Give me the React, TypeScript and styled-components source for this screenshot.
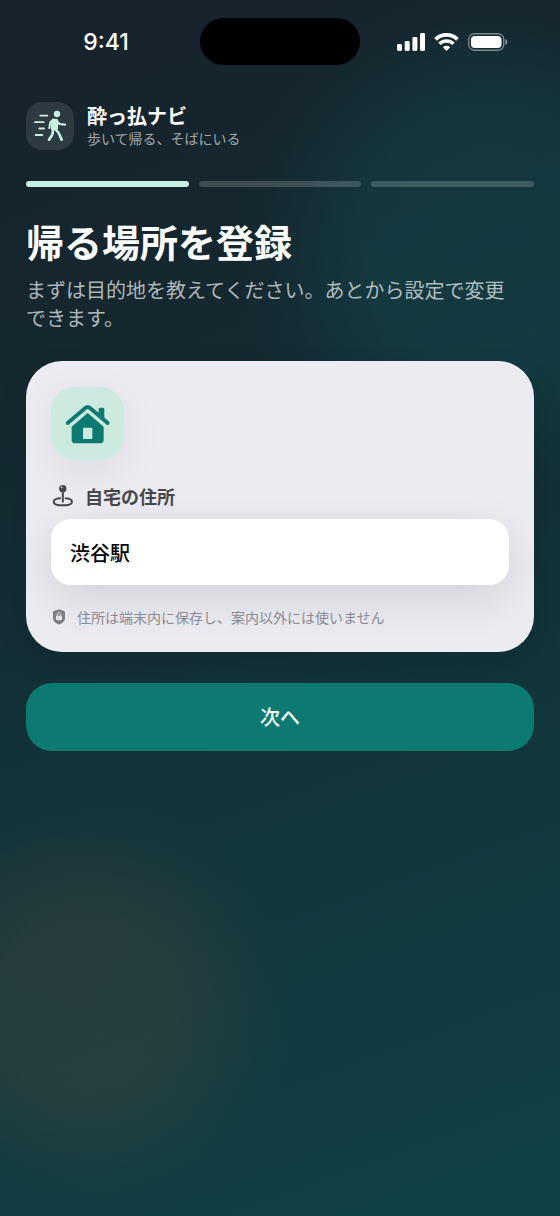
import React, { useState } from "react";
import styled, { createGlobalStyle } from "styled-components";

const GlobalStyle = createGlobalStyle`
  * { box-sizing: border-box; }
  body {
    margin: 0;
    background: #12343a;
    font-family: "Noto Sans CJK JP", "Noto Sans", sans-serif;
  }
`;

const Screen = styled.div`
  min-height: 100vh;
  background:
    radial-gradient(circle at 86px 1005px, rgba(120, 80, 62, 0.22) 0, rgba(120, 80, 62, 0.2) 90px, rgba(120, 80, 62, 0.1) 145px, rgba(120, 80, 62, 0.03) 180px, transparent 210px),
    radial-gradient(circle at 490px 245px, rgba(18, 80, 84, 0.42) 0, rgba(18, 80, 84, 0.4) 125px, rgba(18, 80, 84, 0.22) 180px, rgba(18, 80, 84, 0.06) 225px, transparent 260px),
    linear-gradient(160deg, #17222b 0%, #15272f 25%, #12353b 62%, #0f4246 100%);
`;

const StatusBar = styled.div`
  display: grid;
  grid-template-columns: 1fr 160px 1fr;
  align-items: center;
  padding-top: 18px;
`;

const Time = styled.time`
  padding-left: 12px;
  text-align: center;
  color: #fff;
  font: 500 23px/28px Inter, sans-serif;
`;

const Island = styled.div`
  height: 47px;
  border-radius: 24px;
  background: #000;
`;

const StatusIcons = styled.div`
  display: flex;
  justify-content: center;
  align-items: center;
  gap: 9px;
  padding-right: 16px;
`;

const Content = styled.main`
  display: flex;
  flex-direction: column;
  padding: 37px 26px 40px;
`;

const Brand = styled.header`
  display: flex;
  align-items: center;
  gap: 13px;
`;

const BrandIcon = styled.div`
  display: flex;
  width: 48px;
  height: 48px;
  border-radius: 16px;
  background: rgba(255, 255, 255, 0.1);
`;

const BrandName = styled.div`
  color: #fff;
  font-size: 20px;
  font-weight: 700;
  line-height: 24px;
`;

const BrandTagline = styled.div`
  color: rgba(255, 255, 255, 0.6);
  font-size: 14px;
  line-height: 20px;
`;

const Steps = styled.div`
  display: grid;
  grid-template-columns: repeat(3, 1fr);
  gap: 10px;
  margin-top: 31px;
`;

const Step = styled.div<{ $active?: boolean }>`
  height: 6px;
  border-radius: 3px;
  background: ${(p) => (p.$active ? "#c8f2df" : "rgba(255, 255, 255, 0.18)")};
`;

const Title = styled.h1`
  margin: 31px 0 0;
  color: #fff;
  font-size: 38px;
  font-weight: 700;
  line-height: 46px;
`;

const Lead = styled.p`
  margin: 12px 0 0;
  padding-right: 16px;
  color: rgba(255, 255, 255, 0.68);
  font-size: 20px;
  line-height: 28px;
`;

const Form = styled.form`
  display: flex;
  flex-direction: column;
  gap: 31px;
  margin-top: 29px;
`;

const Card = styled.div`
  display: flex;
  flex-direction: column;
  padding: 26px 25px 25px;
  border-radius: 36px;
  background: #ebebf1;
  overflow: hidden;
  box-shadow: 0 12px 30px rgba(0, 0, 0, 0.12);
`;

const HomeTile = styled.div`
  display: flex;
  width: 73px;
  height: 73px;
  border-radius: 24px;
  background: #cdeadf;
  box-shadow: 0 12px 44px rgba(40, 30, 60, 0.07);
`;

const FieldLabel = styled.label`
  display: flex;
  align-items: center;
  gap: 10px;
  margin-top: 24px;
  color: #48484c;
  font-size: 18px;
  font-weight: 700;
  line-height: 24px;
`;

const AddressInput = styled.input`
  width: 100%;
  height: 66px;
  margin-top: 11px;
  padding: 0 19px;
  border: 0;
  border-radius: 20px;
  outline: 0;
  background: #fff;
  box-shadow: 0 14px 44px rgba(40, 30, 60, 0.12);
  color: #000;
  font: 500 20px/28px "Noto Sans CJK JP", sans-serif;
`;

const Hint = styled.div`
  display: flex;
  align-items: center;
  gap: 10px;
  margin-top: 22px;
  color: #8a8a90;
  font-size: 14px;
  line-height: 20px;
`;

const NextButton = styled.button`
  height: 68px;
  border: 0;
  border-radius: 26px;
  background: #0c7a71;
  color: #fff;
  font: 500 20px/28px "Noto Sans CJK JP", sans-serif;
  cursor: pointer;
`;

const SignalIcon = () => (
  <svg width="28" height="18" viewBox="0 0 28 18" fill="#fff" aria-hidden="true">
    <rect x="0" y="11" width="5" height="7" rx="1.4" />
    <rect x="7.7" y="8" width="5" height="10" rx="1.4" />
    <rect x="15.4" y="4" width="5" height="14" rx="1.4" />
    <rect x="23" y="0" width="5" height="18" rx="1.4" />
  </svg>
);

const WifiIcon = () => (
  <svg width="25" height="18" viewBox="0 0 25 18" fill="none" stroke="#fff" strokeWidth="3.6" aria-hidden="true">
    <path d="M1.5 6.4a15.600 15.600 0 0 1 22 0" />
    <path d="M5.500 10.800a10 10 0 0 1 14 0" />
    <path d="M12.5 18l-3.600-3.800a5.200 5.200 0 0 1 7.200 0z" fill="#fff" stroke="none" />
  </svg>
);

const BatteryIcon = () => (
  <svg width="40" height="18" viewBox="0 0 40 18" aria-hidden="true">
    <rect x="0.75" y="0.75" width="35" height="16.5" rx="5.6" fill="none" stroke="#fff" strokeOpacity="0.45" strokeWidth="1.3" />
    <rect x="3" y="3" width="30.5" height="12" rx="3.8" fill="#fff" />
    <path d="M37.4 6v6c1.3-.5 2-1.600 2-3s-.7-2.500-2-3z" fill="#fff" fillOpacity="0.5" />
  </svg>
);

const WalkIcon = () => (
  <svg width="48" height="48" viewBox="0 0 144 144" fill="none" stroke="#c8f2df" strokeLinecap="round" strokeLinejoin="round" aria-hidden="true">
    <circle cx="93" cy="36" r="9.500" fill="#c8f2df" stroke="none" />
    <path d="M43 41h21M27 60.500h26M40 79.500h14M29 99h20" strokeWidth="5.500" />
    <path d="M83 53l-10 8-3 17" strokeWidth="6.500" />
    <path d="M92 57l9 9 16 2" strokeWidth="6.500" />
    <path d="M83 55l9 1-1 23-11 1 1-24z" fill="#c8f2df" strokeWidth="10" />
    <path d="M87 80l11 13 9 20" strokeWidth="8" />
    <path d="M81 84l-2 14-10 15" strokeWidth="8" />
  </svg>
);

const HomeIcon = () => (
  <svg width="73" height="73" viewBox="-2 0 219 219" fill="#0c7a71" aria-hidden="true">
    <path d="M141 87V67q0-5 5-5h7q5 0 5 5v33z" />
    <path d="M48 108l53-45q7-6 14 0l53 45" fill="none" stroke="#0c7a71" strokeWidth="11.500" strokeLinecap="round" strokeLinejoin="round" />
    <path fillRule="evenodd" d="M108 78l48 41v39q0 11-11 11H71q-11 0-11-11v-39zM97 122q-3 0-3 3v28q0 3 3 3h22q3 0 3-3v-28q0-3-3-3z" />
  </svg>
);

const PinIcon = () => (
  <svg width="24" height="24" viewBox="0 0 72 72" fill="none" stroke="#48484c" aria-hidden="true">
    <path d="M27 43C15 44 8 48 8 53c0 7 12 11 27 11s28-4 28-11c0-5-8-9-19-10" strokeWidth="6" strokeLinecap="round" />
    <path d="M35.500 22v31" strokeWidth="6" strokeLinecap="round" />
    <circle cx="35.500" cy="14" r="11" fill="#48484c" stroke="none" />
    <circle cx="32" cy="10" r="3" fill="#b5b5ba" stroke="none" />
  </svg>
);

const ShieldIcon = () => (
  <svg width="16" height="16" viewBox="0 0 48 48" aria-hidden="true">
    <path d="M24 1l15 5q3 1 3 5v17c0 9-8 15-18 19C14 43 6 37 6 28V11q0-4 3-5z" fill="#7e7e84" />
    <rect x="15" y="20" width="18" height="14" rx="3" fill="#e4e4e9" />
    <path d="M19 21v-5c0-7 10-7 10 0v5" fill="none" stroke="#e4e4e9" strokeWidth="3" />
  </svg>
);

export default function App() {
  const [address, setAddress] = useState("渋谷駅");

  return (
    <>
      <GlobalStyle />
      <Screen>
        <StatusBar>
          <Time>9:41</Time>
          <Island />
          <StatusIcons>
            <SignalIcon />
            <WifiIcon />
            <BatteryIcon />
          </StatusIcons>
        </StatusBar>
        <Content>
          <Brand>
            <BrandIcon>
              <WalkIcon />
            </BrandIcon>
            <div>
              <BrandName>酔っ払ナビ</BrandName>
              <BrandTagline>歩いて帰る、そばにいる</BrandTagline>
            </div>
          </Brand>
          <Steps>
            <Step $active />
            <Step />
            <Step />
          </Steps>
          <Title>帰る場所を登録</Title>
          <Lead>まずは目的地を教えてください。あとから設定で変更できます。</Lead>
          <Form onSubmit={(e) => e.preventDefault()}>
            <Card>
              <HomeTile>
                <HomeIcon />
              </HomeTile>
              <FieldLabel htmlFor="address">
                <PinIcon />
                自宅の住所
              </FieldLabel>
              <AddressInput id="address" type="text" value={address} onChange={(e) => setAddress(e.target.value)} />
              <Hint>
                <ShieldIcon />
                住所は端末内に保存し、案内以外には使いません
              </Hint>
            </Card>
            <NextButton type="submit">次へ</NextButton>
          </Form>
        </Content>
      </Screen>
    </>
  );
}
